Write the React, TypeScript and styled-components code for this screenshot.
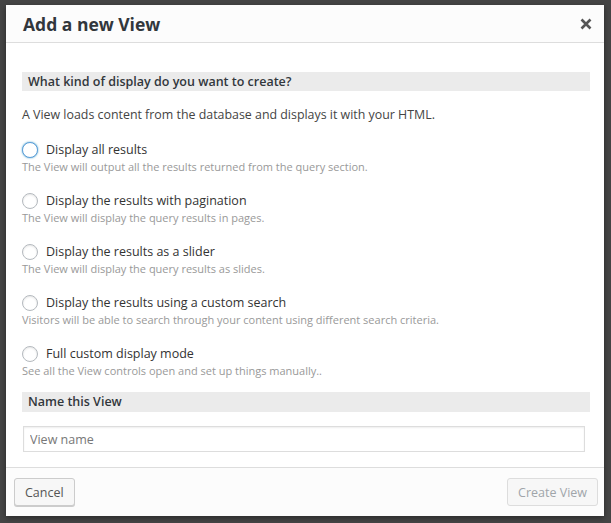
import React from "react";
import styled, { createGlobalStyle } from "styled-components";

const Global = createGlobalStyle`
  html, body { margin: 0; padding: 0; }
  body {
    background: #454545;
    font-family: "Open Sans", "Noto Sans", sans-serif;
    color: #333;
  }
`;

const Backdrop = styled.div`
  width: 611px;
  height: 523px;
  box-sizing: border-box;
  padding: 5px 7px 7px 6px;
  background: #454545;
`;

const Dialog = styled.div`
  width: 598px;
  height: 511px;
  background: #fff;
  display: flex;
  flex-direction: column;
  box-shadow: 0 2px 6px rgba(0, 0, 0, 0.4);
`;

const Header = styled.div`
  height: 37px;
  flex: none;
  display: flex;
  align-items: center;
  justify-content: space-between;
  background: #fcfcfc;
  border-bottom: 1px solid #dddddd;
  padding: 0 10px 0 17px;
`;

const Title = styled.h1`
  margin: 0;
  font-size: 17.5px;
  font-weight: 700;
  color: #32373c;
`;

const Close = styled.button`
  border: 0;
  background: none;
  padding: 0;
  width: 16px;
  height: 16px;
  display: flex;
  align-items: center;
  justify-content: center;
  cursor: pointer;
`;

const Body = styled.div`
  flex: 1;
  padding: 29px 14px 0 16px;
`;

const SectionBar = styled.div`
  background: #ebebeb;
  height: 19px;
  line-height: 19px;
  padding-left: 6px;
  font-size: 12.5px;
  font-weight: 600;
  color: #32373c;
`;

const Intro = styled.p`
  margin: 15px 0 0;
  font-size: 12.4px;
  line-height: 17px;
  color: #444;
`;

const Options = styled.div`
  margin-top: 18px;
  display: flex;
  flex-direction: column;
  gap: 17px;
`;

const Option = styled.label`
  display: flex;
  flex-direction: column;
  cursor: pointer;
`;

const OptionLine = styled.span`
  display: flex;
  align-items: center;
  gap: 8px;
  height: 17px;
`;

const Radio = styled.span<{ $focused?: boolean }>`
  width: 16px;
  height: 16px;
  box-sizing: border-box;
  border-radius: 50%;
  border: 1px solid ${(p) => (p.$focused ? "#5b9dd9" : "#b4b9be")};
  box-shadow: ${(p) =>
    p.$focused ? "0 0 2px rgba(30,140,190,0.8)" : "inset 0 1px 2px rgba(0,0,0,0.1)"};
  background: #fff;
  flex: none;
`;

const OptionLabel = styled.span`
  font-size: 12.5px;
  color: #333;
`;

const OptionDesc = styled.span`
  font-size: 11px;
  line-height: 17px;
  color: #999;
`;

const NameBar = styled(SectionBar)`
  margin-top: 13px;
  height: 20px;
  line-height: 20px;
`;

const NameInput = styled.input`
  display: block;
  margin: 14px 0 0 1px;
  width: 562px;
  height: 26px;
  box-sizing: border-box;
  border: 1px solid #dddddd;
  box-shadow: inset 0 1px 2px rgba(0, 0, 0, 0.07);
  padding: 0 6px;
  font-family: inherit;
  font-size: 12.5px;
  color: #333;
  outline: none;
  &::placeholder { color: #777; }
`;

const Footer = styled.div`
  flex: none;
  height: 49px;
  box-sizing: border-box;
  border-top: 1px solid #dddddd;
  background: #fcfcfc;
  display: flex;
  align-items: center;
  justify-content: space-between;
  padding: 0 6px 0 8px;
`;

const Button = styled.button<{ $disabled?: boolean }>`
  height: 28px;
  padding: 0 10px;
  font-family: inherit;
  font-size: 12.5px;
  border-radius: 3px;
  border: 1px solid ${(p) => (p.$disabled ? "#dddddd" : "#cccccc")};
  background: #f7f7f7;
  color: ${(p) => (p.$disabled ? "#a0a5aa" : "#555")};
  box-shadow: ${(p) => (p.$disabled ? "none" : "0 1px 0 #ccc")};
  cursor: ${(p) => (p.$disabled ? "default" : "pointer")};
`;

const options = [
  {
    label: "Display all results",
    desc: "The View will output all the results returned from the query section.",
  },
  {
    label: "Display the results with pagination",
    desc: "The View will display the query results in pages.",
  },
  {
    label: "Display the results as a slider",
    desc: "The View will display the query results as slides.",
  },
  {
    label: "Display the results using a custom search",
    desc: "Visitors will be able to search through your content using different search criteria.",
  },
  {
    label: "Full custom display mode",
    desc: "See all the View controls open and set up things manually..",
  },
];

export default function App() {
  return (
    <>
      <Global />
      <Backdrop>
        <Dialog>
          <Header>
            <Title>Add a new View</Title>
            <Close aria-label="Close">
              <svg width="12" height="12" viewBox="0 0 12 12">
                <path
                  d="M1.5 1.5 L10.5 10.5 M10.5 1.5 L1.5 10.5"
                  stroke="#555"
                  strokeWidth="2.6"
                  strokeLinecap="butt"
                />
              </svg>
            </Close>
          </Header>
          <Body>
            <SectionBar>What kind of display do you want to create?</SectionBar>
            <Intro>
              A View loads content from the database and displays it with your HTML.
            </Intro>
            <Options>
              {options.map((o, i) => (
                <Option key={o.label}>
                  <OptionLine>
                    <Radio $focused={i === 0} />
                    <OptionLabel>{o.label}</OptionLabel>
                  </OptionLine>
                  <OptionDesc>{o.desc}</OptionDesc>
                </Option>
              ))}
            </Options>
            <NameBar>Name this View</NameBar>
            <NameInput placeholder="View name" />
          </Body>
          <Footer>
            <Button>Cancel</Button>
            <Button $disabled>Create View</Button>
          </Footer>
        </Dialog>
      </Backdrop>
    </>
  );
}
